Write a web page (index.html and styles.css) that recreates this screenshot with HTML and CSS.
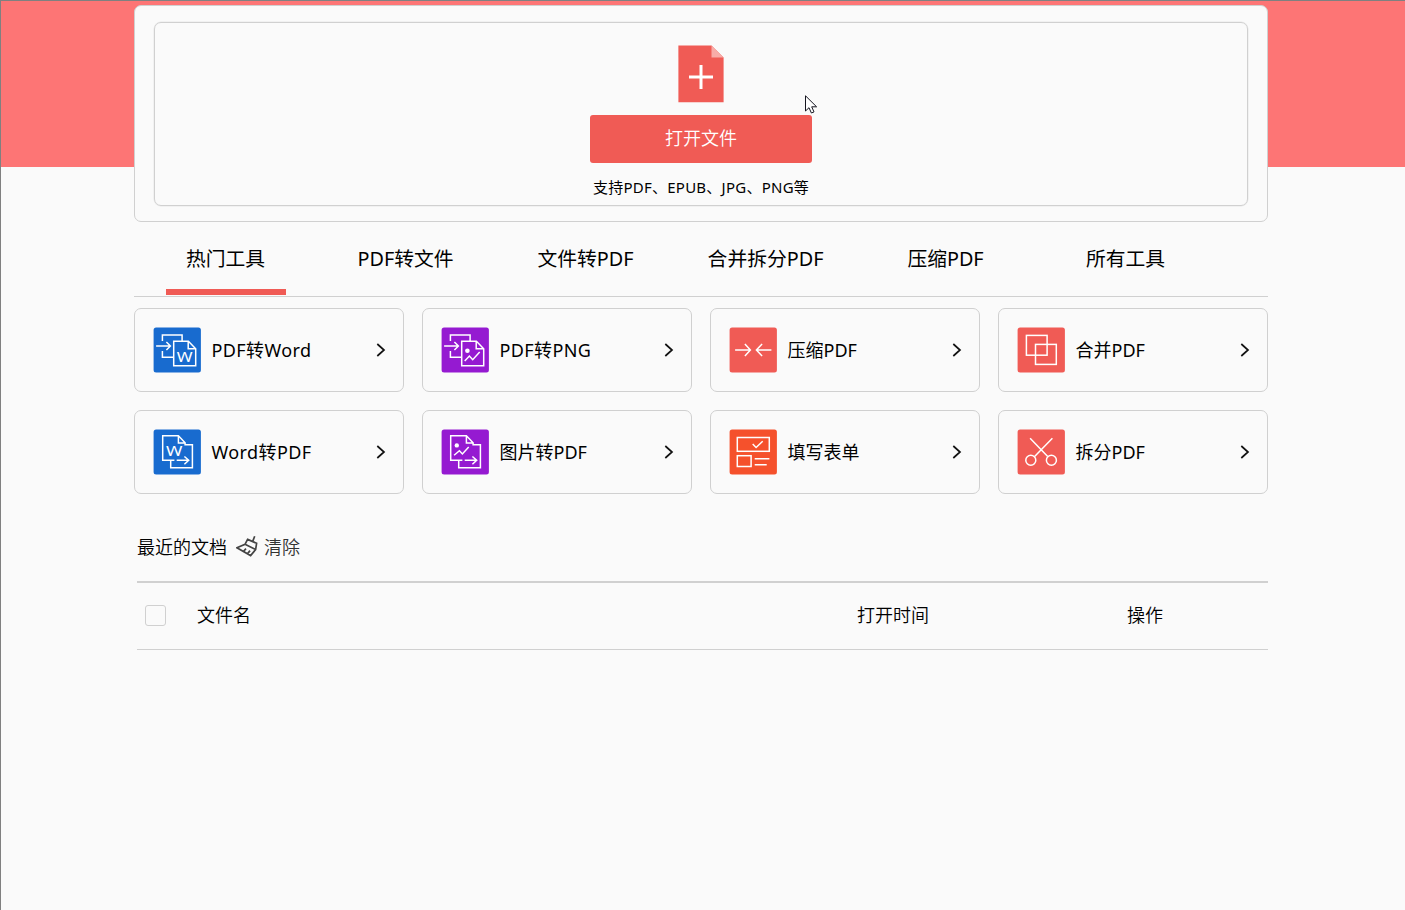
FILE: index.html
```html
<!DOCTYPE html>
<html lang="zh-CN">
<head>
    <meta charset="UTF-8">
    <meta name="viewport" content="width=device-width, initial-scale=1.0">
    <title>PDF工具</title>
    <link rel="stylesheet" href="styles.css">
</head>
<body>

<main class="container">
    <section class="open-panel">
        <div class="drop-area">
            <svg class="file-icon" width="46" height="58" viewBox="0 0 46 58">
                <path d="M.4 .4H33.5L45.6 12.5V57.3H.4Z" fill="#f05b55"/>
                <path d="M33.5 .4L45.6 12.5H33.5Z" fill="#f8aca8"/>
                <path d="M11 32H35M23 20V44" stroke="#fff" stroke-width="3"/>
            </svg>
            <button class="open-button" type="button">打开文件</button>
            <p class="formats">支持PDF、EPUB、JPG、PNG等</p>
        </div>
    </section>

    <nav class="tabs">
        <a class="tab active">热门工具</a>
        <a class="tab">PDF转文件</a>
        <a class="tab">文件转PDF</a>
        <a class="tab">合并拆分PDF</a>
        <a class="tab">压缩PDF</a>
        <a class="tab">所有工具</a>
    </nav>

    <section class="tools">
        <div class="tool">
            <svg class="tool-icon" viewBox="0 0 48 46">
                <rect class="blue" x=".6" y=".4" width="47.3" height="45.2" rx="2.5"/>
                <path d="M9.4 14V8H29.1V14M9.4 24V30.3H20.4M3.1 19H16.9M13.4 15L17.4 19L13.4 23"/>
                <path d="M20.7 14.3H35.4L42.7 21.7V38.7H20.7ZM35.2 14.3V21.7H42.7"/>
                <text x="23.8" y="34.7" textLength="15.8" lengthAdjust="spacingAndGlyphs">W</text>
            </svg>
            <span class="tool-name wide">PDF转Word</span>
            <svg class="chevron" viewBox="0 0 10 14"><path d="M1.3 1L8 7L1.3 13"/></svg>
        </div>
        <div class="tool">
            <svg class="tool-icon" viewBox="0 0 48 46">
                <rect class="purple" x=".6" y=".4" width="47.3" height="45.2" rx="2.5"/>
                <path d="M9.4 14V8H29.1V14M9.4 24V30.3H20.4M3.1 19H16.9M13.4 15L17.4 19L13.4 23"/>
                <path d="M20.7 14.3H35.4L42.7 21.7V38.7H20.7ZM35.2 14.3V21.7H42.7"/>
                <circle class="dot" cx="26.4" cy="23.7" r="2.3"/>
                <path d="M23.7 34L28.4 29L31.7 32.7L38.7 25"/>
            </svg>
            <span class="tool-name wide">PDF转PNG</span>
            <svg class="chevron" viewBox="0 0 10 14"><path d="M1.3 1L8 7L1.3 13"/></svg>
        </div>
        <div class="tool">
            <svg class="tool-icon" viewBox="0 0 48 46">
                <rect class="red" x=".6" y=".4" width="47.3" height="45.2" rx="2.5"/>
                <path d="M6.1 23H21.1M15.9 17L21.4 23L15.9 29M42.4 23H27.7M33.1 17L27.4 23L33.1 29"/>
            </svg>
            <span class="tool-name">压缩PDF</span>
            <svg class="chevron" viewBox="0 0 10 14"><path d="M1.3 1L8 7L1.3 13"/></svg>
        </div>
        <div class="tool">
            <svg class="tool-icon" viewBox="0 0 48 46">
                <rect class="red" x=".6" y=".4" width="47.3" height="45.2" rx="2.5"/>
                <rect x="9.4" y="8.4" width="20.7" height="19.8"/>
                <rect x="18.5" y="17.4" width="20.8" height="20"/>
            </svg>
            <span class="tool-name">合并PDF</span>
            <svg class="chevron" viewBox="0 0 10 14"><path d="M1.3 1L8 7L1.3 13"/></svg>
        </div>
        <div class="tool">
            <svg class="tool-icon" viewBox="0 0 48 46">
                <rect class="blue" x=".6" y=".4" width="47.3" height="45.2" rx="2.5"/>
                <path d="M21.4 31.3H9.7V6.7H25.4L32.1 13.7V15.7H39.4V38.7H17.7V31.3M25.4 6.7V13.9H32.1"/>
                <path d="M23.7 31.3H35.4M31.4 27.5L35.7 31.3L31.4 35.3"/>
                <text x="13.1" y="27.3" textLength="16.4" lengthAdjust="spacingAndGlyphs">W</text>
            </svg>
            <span class="tool-name wide">Word转PDF</span>
            <svg class="chevron" viewBox="0 0 10 14"><path d="M1.3 1L8 7L1.3 13"/></svg>
        </div>
        <div class="tool">
            <svg class="tool-icon" viewBox="0 0 48 46">
                <rect class="purple" x=".6" y=".4" width="47.3" height="45.2" rx="2.5"/>
                <path d="M21.4 31.3H9.7V6.7H25.4L32.1 13.7V15.7H39.4V38.7H17.7V31.3M25.4 6.7V13.9H32.1"/>
                <path d="M23.7 31.3H35.4M31.4 27.5L35.7 31.3L31.4 35.3"/>
                <circle class="dot" cx="15.8" cy="16.4" r="2.2"/>
                <path d="M13.1 26.3L18.4 21.7L21.4 25L27.7 18"/>
            </svg>
            <span class="tool-name">图片转PDF</span>
            <svg class="chevron" viewBox="0 0 10 14"><path d="M1.3 1L8 7L1.3 13"/></svg>
        </div>
        <div class="tool">
            <svg class="tool-icon" viewBox="0 0 48 46">
                <rect class="orange" x=".6" y=".4" width="47.3" height="45.2" rx="2.5"/>
                <rect x="8.3" y="8.5" width="32" height="13.8"/>
                <rect x="8.3" y="26.7" width="13.8" height="10.8"/>
                <path d="M23.7 15L27.1 18.5L33.7 12.3M25.7 29.7H40.4M25.7 35.7H37.7"/>
            </svg>
            <span class="tool-name">填写表单</span>
            <svg class="chevron" viewBox="0 0 10 14"><path d="M1.3 1L8 7L1.3 13"/></svg>
        </div>
        <div class="tool">
            <svg class="tool-icon" viewBox="0 0 48 46">
                <rect class="red" x=".6" y=".4" width="47.3" height="45.2" rx="2.5"/>
                <path d="M13.1 9.3L30.7 27.5M35.4 9.3L17.6 27.5"/>
                <circle cx="13.8" cy="31.3" r="5"/>
                <circle cx="34.4" cy="31.3" r="5"/>
            </svg>
            <span class="tool-name">拆分PDF</span>
            <svg class="chevron" viewBox="0 0 10 14"><path d="M1.3 1L8 7L1.3 13"/></svg>
        </div>
    </section>

    <section class="recent">
        <div class="recent-title">
            <span>最近的文档</span>
            <svg class="broom" width="22" height="21" viewBox="0 0 22 21">
                <path d="M18.7 .3L16.7 5.4M11.6 3.4L20.6 7.3L19.6 13.6L14.6 19.6L.9 11.8L9 8.3ZM9 8.3L19.6 13.4M7.5 15.3L10 12.7M11.8 17.4L14 14.6"/>
            </svg>
            <a class="clear">清除</a>
        </div>
        <div class="table-head">
            <span class="checkbox"></span>
            <span class="col">文件名</span>
            <span class="col">打开时间</span>
            <span class="col">操作</span>
        </div>
    </section>
</main>

<svg class="cursor" width="13" height="19" viewBox="0 0 13 19">
    <path d="M.5 .8V16L4 12.7L6.4 18L9 16.9L6.7 11.8H11.6Z" fill="#fff" stroke="#15151f" stroke-width="1"/>
</svg>

</body>
</html>
```
FILE: styles.css
```css
* {
    box-sizing: border-box;
}
body {
    margin: 0;
    height: 910px;
    overflow: hidden;
    border-top: 1px solid #808080;
    border-left: 1px solid #808080;
    background: linear-gradient(#fd7575 167px, #fafafa 167px) no-repeat;
    background-color: #fafafa;
    font-family: "Noto Sans", "Noto Sans CJK SC", sans-serif;
    font-size: 18px;
    font-weight: 350;
    color: #000;
}
.container {
    width: 1134px;
    margin: 4px 0 0 133px;
}
.open-panel {
    height: 217px;
    padding: 16px 19px 15px;
    background: #fafafa;
    border: 1px solid #d0d0d0;
    border-radius: 7px;
}
.drop-area {
    height: 184px;
    display: flex;
    flex-direction: column;
    align-items: center;
    padding-top: 22px;
    border: 1px solid #d0d0d0;
    border-radius: 7px;
    box-shadow: 0 0 0 .5px #e8e8e8;
}
.file-icon {
    display: block;
}
.open-button {
    width: 222px;
    height: 48px;
    margin-top: 12px;
    padding: 0 0 2px;
    border: none;
    border-radius: 3px;
    background: #f05b55;
    color: #fff;
    font-family: inherit;
    font-size: 18px;
    font-weight: 350;
    line-height: 46px;
    cursor: pointer;
}
.formats {
    margin: 13px 0 0;
    font-size: 15px;
    font-weight: 400;
    line-height: 22px;
    letter-spacing: .25px;
    white-space: nowrap;
}
.tabs {
    display: flex;
    height: 75px;
    padding-left: 1.5px;
    border-bottom: 1px solid #d0d0d0;
}
.tab {
    width: 180px;
    display: flex;
    flex-direction: column;
    align-items: center;
    padding-top: 22px;
    font-size: 19.8px;
    font-weight: 400;
    line-height: 30px;
}
.tab.active::after {
    content: "";
    width: 120px;
    height: 6px;
    margin-top: 15px;
    background: #f05b55;
}
.tools {
    display: grid;
    grid-template-columns: repeat(4, 270px);
    grid-auto-rows: 84px;
    gap: 18px;
    margin-top: 11px;
}
.tool {
    display: flex;
    align-items: center;
    padding: 0 17.5px 0 18px;
    border: 1px solid #d0d0d0;
    border-radius: 7px;
}
.tool-icon {
    width: 48px;
    height: 46px;
    fill: none;
    stroke: #fff;
    stroke-width: 1.5;
}
.tool-icon text {
    fill: #fff;
    stroke: none;
    font-size: 14.2px;
    font-weight: 400;
}
.tool-icon .dot {
    fill: #fff;
    stroke: none;
}
.tool-icon .blue {
    fill: #186bcf;
    stroke: none;
}
.tool-icon .purple {
    fill: #951ad1;
    stroke: none;
}
.tool-icon .red {
    fill: #f05b55;
    stroke: none;
}
.tool-icon .orange {
    fill: #f5512c;
    stroke: none;
}
.tool-name {
    flex: 1;
    margin-left: 10.5px;
    padding-bottom: 2px;
    font-weight: 400;
    white-space: nowrap;
}
.tool-name.wide {
    letter-spacing: .4px;
}
.chevron {
    width: 10px;
    height: 14px;
    fill: none;
    stroke: #111;
    stroke-width: 1.7;
}
.recent {
    margin: 38px 0 0 3px;
}
.recent-title {
    display: flex;
    align-items: center;
    height: 28px;
}
.recent-title span,
.clear {
    padding-bottom: 1px;
}
.col {
    padding-bottom: 3px;
}
.broom {
    margin: 0 6px 0 9px;
    fill: none;
    stroke: #444;
    stroke-width: 1.7;
}
.clear {
    color: #333;
}
.table-head {
    display: grid;
    grid-template-columns: 52px 660px 270px 1fr;
    align-items: center;
    height: 69px;
    margin-top: 21px;
    padding: 0 0 1px 8px;
    border-top: 2px solid #d0d0d0;
    border-bottom: 1px solid #d0d0d0;
}
.checkbox {
    width: 21px;
    height: 21px;
    border: 1px solid #d0d0d0;
    border-radius: 3px;
}
.cursor {
    position: absolute;
    left: 805px;
    top: 95px;
}
```
